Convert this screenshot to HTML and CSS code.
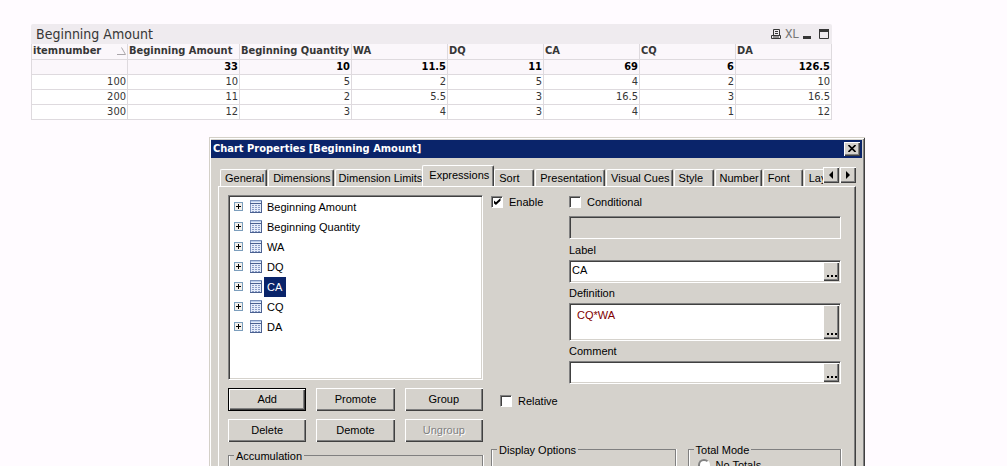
FILE: index.html
```html
<!DOCTYPE html>
<html lang="en">
<head>
<meta charset="utf-8">
<title>Chart Properties</title>
<link rel="stylesheet" href="styles.css">
</head>
<body>
<svg class="defs" aria-hidden="true">
  <symbol id="expander" viewBox="0 0 9 9">
    <rect x=".5" y=".5" width="8" height="8" fill="#f4f0ea" stroke="#7b9ebd"/>
    <path d="M2 4.500h5M4.500 2v5" stroke="#000"/>
  </symbol>
  <symbol id="sheet" viewBox="0 0 12 13">
    <rect x=".5" y=".5" width="11" height="12" fill="#e6edfa" stroke="#7c92bd"/>
    <path d="M1 1.500h10" stroke="#b9cdec"/>
    <path d="M0 3.500h12M11.500 1v12M0 12.500h12" stroke="#4a6090"/>
    <path d="M2 5.500h8M2 7.500h8M2 9.500h8M2 11.500h8" stroke="#8b9dc6" stroke-dasharray="2 1"/>
  </symbol>
</svg>

<section class="chart">
  <header class="chart-caption">
    <h1 class="chart-title">Beginning Amount</h1>
    <div class="chart-tools">
      <button class="tool" aria-label="Print"><svg width="10" height="10" viewBox="0 0 10 10"><path d="M2.500 6V.5h6V6M4 2.500h3M4 4.500h3M.5 9.500v-3h9v3zM2 8h6" fill="none" stroke="#363636"/></svg></button>
      <button class="tool tool-text">XL</button>
      <button class="tool" aria-label="Minimize"><svg width="8" height="10" viewBox="0 0 8 10"><path d="M0 7h8v3H0z" fill="#363636"/></svg></button>
      <button class="tool tool-max" aria-label="Maximize"><svg width="10" height="10" viewBox="0 0 10 10"><path d="M.5.5h9v9h-9z" fill="none" stroke="#363636"/><path d="M0 0h10v3H0z" fill="#363636"/></svg></button>
    </div>
  </header>
  <table class="grid">
    <colgroup><col class="c-base"><col class="c-wide"><col class="c-wide"><col class="c-base"><col class="c-base"><col class="c-base"><col class="c-base"><col class="c-base"></colgroup>
    <thead>
      <tr><th><span class="sorted">itemnumber<svg width="9" height="8" viewBox="0 0 9 8"><path d="M0 7.500h8.500L4.500.5" fill="none" stroke="#aaa6aa"/></svg></span></th><th>Beginning Amount</th><th>Beginning Quantity</th><th>WA</th><th>DQ</th><th>CA</th><th>CQ</th><th>DA</th></tr>
    </thead>
    <tbody>
      <tr class="total"><td></td><td>33</td><td>10</td><td>11.5</td><td>11</td><td>69</td><td>6</td><td>126.5</td></tr>
      <tr><td>100</td><td>10</td><td>5</td><td>2</td><td>5</td><td>4</td><td>2</td><td>10</td></tr>
      <tr><td>200</td><td>11</td><td>2</td><td>5.5</td><td>3</td><td>16.5</td><td>3</td><td>16.5</td></tr>
      <tr><td>300</td><td>12</td><td>3</td><td>4</td><td>3</td><td>4</td><td>1</td><td>12</td></tr>
    </tbody>
  </table>
</section>

<section class="dialog" role="dialog" aria-labelledby="dialog-title">
  <header class="titlebar">
    <h2 class="dialog-title" id="dialog-title">Chart Properties [Beginning Amount]</h2>
    <button class="raised close" aria-label="Close"><svg width="8" height="7" viewBox="0 0 8 7"><path d="M.5 0l7 7M7.500 0l-7 7" stroke="#000" stroke-width="1.600"/></svg></button>
  </header>

  <div class="tabbar">
    <div class="tabs" role="tablist">
      <button class="tab" role="tab">General</button>
      <button class="tab" role="tab">Dimensions</button>
      <button class="tab tight" role="tab">Dimension Limits</button>
      <button class="tab active" role="tab" aria-selected="true">Expressions</button>
      <button class="tab narrow" role="tab">Sort</button>
      <button class="tab" role="tab">Presentation</button>
      <button class="tab" role="tab">Visual Cues</button>
      <button class="tab narrow" role="tab">Style</button>
      <button class="tab" role="tab">Number</button>
      <button class="tab narrow" role="tab">Font</button>
      <button class="tab" role="tab">Layout</button>
    </div>
    <div class="tab-scroll">
      <button class="raised scroll" aria-label="Previous tabs"><svg width="4" height="8" viewBox="0 0 4 8"><path d="M4 0v8L0 4z"/></svg></button>
      <button class="raised scroll" aria-label="Next tabs"><svg width="4" height="8" viewBox="0 0 4 8"><path d="M0 0v8l4-4z"/></svg></button>
    </div>
  </div>

  <div class="panel">
    <div class="left">
      <ul class="tree sunken">
        <li><svg class="plus"><use href="#expander"/></svg><svg class="sheet"><use href="#sheet"/></svg><span>Beginning Amount</span></li>
        <li><svg class="plus"><use href="#expander"/></svg><svg class="sheet"><use href="#sheet"/></svg><span>Beginning Quantity</span></li>
        <li><svg class="plus"><use href="#expander"/></svg><svg class="sheet"><use href="#sheet"/></svg><span>WA</span></li>
        <li><svg class="plus"><use href="#expander"/></svg><svg class="sheet"><use href="#sheet"/></svg><span>DQ</span></li>
        <li><svg class="plus"><use href="#expander"/></svg><svg class="sheet"><use href="#sheet"/></svg><span class="selected">CA</span></li>
        <li><svg class="plus"><use href="#expander"/></svg><svg class="sheet"><use href="#sheet"/></svg><span>CQ</span></li>
        <li><svg class="plus"><use href="#expander"/></svg><svg class="sheet"><use href="#sheet"/></svg><span>DA</span></li>
      </ul>
      <div class="actions">
        <button class="raised action default">Add</button>
        <button class="raised action">Promote</button>
        <button class="raised action">Group</button>
        <button class="raised action">Delete</button>
        <button class="raised action">Demote</button>
        <button class="raised action" disabled>Ungroup</button>
      </div>
      <fieldset class="group"><legend>Accumulation</legend></fieldset>
    </div>

    <div class="right">
      <div class="settings">
        <label class="check"><input type="checkbox" checked>Enable</label>
        <div class="fields">
          <label class="check"><input type="checkbox">Conditional</label>
          <input class="sunken condition" type="text" aria-label="Condition" disabled>
          <label class="caption" for="label">Label</label>
          <div class="sunken field"><input id="label" type="text" value="CA"><button class="more" aria-label="Edit label"><i></i><i></i><i></i></button></div>
          <label class="caption" for="definition">Definition</label>
          <div class="sunken field tall"><textarea id="definition" spellcheck="false">CQ*WA</textarea><button class="more" aria-label="Edit definition"><i></i><i></i><i></i></button></div>
          <label class="caption" for="comment">Comment</label>
          <div class="sunken field"><input id="comment" type="text"><button class="more" aria-label="Edit comment"><i></i><i></i><i></i></button></div>
        </div>
      </div>
      <label class="check relative"><input type="checkbox">Relative</label>
      <div class="groups">
        <fieldset class="group"><legend>Display Options</legend></fieldset>
        <fieldset class="group"><legend>Total Mode</legend>
          <label class="radio"><input type="radio" name="total">No Totals</label>
        </fieldset>
      </div>
    </div>
  </div>
</section>
</body>
</html>
```
FILE: styles.css
```css
:root {
  --face: #d5d2cc;
  --navy: #0a246a;
  --ink: #363636;
  --line: #dedade;
  --shadow: #808080;
  --dark: #404040;
  --tahoma: "DejaVu Sans Condensed", "DejaVu Sans", sans-serif;
}

* { box-sizing: border-box; }

body {
  display: flex;
  flex-direction: column;
  height: 100vh;
  margin: 0;
  padding: 24px 0 0;
  overflow: hidden;
  background: #fffbff;
  color: #000;
  font: 11px/14px "Liberation Sans", Arial, sans-serif;
}

button, input, textarea { margin: 0; padding: 0; border: 0; border-radius: 0; color: inherit; font: inherit; }
svg { display: block; flex: none; }
.defs { position: absolute; width: 0; height: 0; }

/* Straight table */
.chart { flex: none; margin: 0 175px 17px 31px; color: var(--ink); font-family: var(--tahoma); }
.chart-caption { display: flex; align-items: center; justify-content: space-between; height: 20px; padding: 0 3px 0 5px; background: #efebef; border-radius: 2px 2px 0 0; }
.chart-title { margin: 0; font-size: 14px; font-weight: 400; line-height: 20px; }
.chart-tools { display: flex; align-items: center; gap: 4px; }
.tool { background: none; }
.tool-text { color: #777; font: 12px/12px "Liberation Sans Narrow", Roboto, sans-serif; }
.tool-max { margin-left: 4px; }

.grid { width: 100%; table-layout: fixed; border-collapse: collapse; background: #fff; font-size: 11px; line-height: 14px; }
.c-base { width: 12%; }
.c-wide { width: 14%; }
.grid th, .grid td { height: 15px; padding: 0 1px; border: 1px solid var(--line); white-space: nowrap; }
.grid th { border-top: 0; background: #fbf7fb; text-align: left; }
.grid td { text-align: right; }
.sorted { display: flex; align-items: center; justify-content: space-between; }
.total { background: #fbf7fb; color: #000; font-weight: 700; }

/* Dialog frame */
.dialog {
  display: flex;
  flex: 1 0 auto;
  flex-direction: column;
  margin: 0 142px 0 209px;
  padding: 3px 3px 0 2px;
  background: var(--face);
  box-shadow: inset 0 1px #d4d0c8, inset 1px 0 #d4d0c8, inset -1px 0 var(--dark), inset 0 2px #fff, inset 2px 0 #fff, inset -2px 0 var(--shadow);
}
.titlebar { display: flex; align-items: center; justify-content: space-between; height: 18px; padding: 0 2px; background: var(--navy); }
.dialog-title { margin: 0; color: #fff; font: 700 11px/18px var(--tahoma); }

.raised {
  display: flex;
  align-items: center;
  justify-content: center;
  background: var(--face);
  box-shadow: inset 1px 1px #fff, inset -1px -1px var(--dark), inset -2px -2px var(--shadow);
}
.sunken {
  border: 1px solid;
  border-color: var(--shadow) #fff #fff var(--shadow);
  box-shadow: inset 1px 1px var(--dark), inset -1px -1px var(--face);
}
.close { width: 16px; height: 14px; }

/* Tabs */
.tabbar { display: flex; height: 29px; padding: 7px 6px 0 9px; }
.tabs { display: flex; flex: 1; align-items: flex-end; min-width: 0; overflow: hidden; }
.tab {
  flex: none;
  height: 18px;
  margin-right: 1px;
  padding: 0 2px 0 4px;
  background: var(--face);
  border-top: 1px solid #fff;
  border-left: 1px solid #fff;
  border-right: 1px solid var(--dark);
  border-radius: 2px 2px 0 0;
  box-shadow: inset -1px 0 var(--shadow);
  text-align: left;
}
.tab.tight { margin-right: 0; padding: 0 0 0 3px; border-right: 0; box-shadow: none; }
.tab.active { height: 22px; margin-right: 0; padding: 0 4px 3px 6px; }
.tab.narrow { width: 40px; }
.tab-scroll { display: flex; gap: 1px; padding-top: 2px; }
.scroll { width: 16px; height: 16px; }

/* Panel */
.panel {
  display: flex;
  flex: 1;
  gap: 8px;
  margin: -1px 6px 0 7px;
  padding: 8px 14px 0 9px;
  border-top: 1px solid #fff;
  border-left: 1px solid #fff;
  border-right: 1px solid var(--dark);
  box-shadow: inset -1px 0 var(--shadow);
}
.left { flex: 0 0 255px; }
.tree { height: 185px; margin: 0 0 8px; padding: 1px 0 0 5px; background: #fff; list-style: none; }
.tree li { display: flex; align-items: center; height: 20px; }
.plus { width: 9px; height: 9px; margin-right: 7px; }
.sheet { width: 12px; height: 13px; margin-right: 2px; }
.tree span { padding: 0 4px 0 3px; line-height: 20px; }
.selected { background: var(--navy); color: #fff; }

.actions { display: grid; grid-template-columns: repeat(3, 1fr); gap: 8px 10px; margin-bottom: 7px; }
.action { height: 23px; }
.default { border: 1px solid #000; }
.action:disabled { color: var(--shadow); text-shadow: 1px 1px #fff; }

.group { min-width: 0; height: 60px; margin: 0; padding: 0 9px; border: 1px solid var(--shadow); box-shadow: inset 1px 0 #fff, 1px 0 #fff; }
.group legend { margin-left: -4px; padding: 0 2px; }

.right { flex: 1; min-width: 0; }
.settings { display: grid; grid-template-columns: 78px 1fr; align-items: start; }
.check { display: flex; align-items: center; gap: 6px; height: 14px; }
.check input {
  display: grid;
  place-items: center;
  width: 12px;
  height: 12px;
  appearance: none;
  background: #fff;
  border: 1px solid;
  border-color: var(--shadow) #fff #fff var(--shadow);
  box-shadow: inset 1px 1px var(--dark);
}
.check input:checked::before {
  width: 7px;
  height: 7px;
  background: #000;
  clip-path: polygon(0 28%, 35% 62%, 100% 0, 100% 40%, 35% 100%, 0 70%);
  content: "";
}
.fields { display: flex; flex-direction: column; }
.condition { height: 23px; margin: 7px 0 4px; background: var(--face); }
.caption { margin-bottom: 3px; }
.field { display: flex; height: 23px; margin-bottom: 3px; padding: 2px 1px 1px 2px; background: #fff; }
.field.tall { height: 38px; }
.field input, .field textarea { flex: 1; min-width: 0; height: 100%; background: none; outline: 0; resize: none; }
.field input { padding-bottom: 3px; }
.field textarea { padding: 2px 5px; color: #800000; overflow: hidden; }
.more { display: flex; flex: none; align-items: flex-end; justify-content: center; gap: 2px; width: 15px; padding: 0 0 4px; background: var(--face); box-shadow: inset -1px -1px var(--dark), inset -2px -2px var(--shadow); }
.more i { width: 2px; height: 2px; background: #000; }

.relative { margin: 7px 0 35px 9px; }
.groups { display: grid; grid-template-columns: 184fr 153fr; gap: 12px; }
.radio { display: flex; align-items: center; gap: 6px; margin-top: 1px; }
.radio input { width: 12px; height: 12px; appearance: none; background: #fff; border: 2px solid; border-color: var(--shadow) #fff #fff var(--shadow); border-radius: 50%; }
```
